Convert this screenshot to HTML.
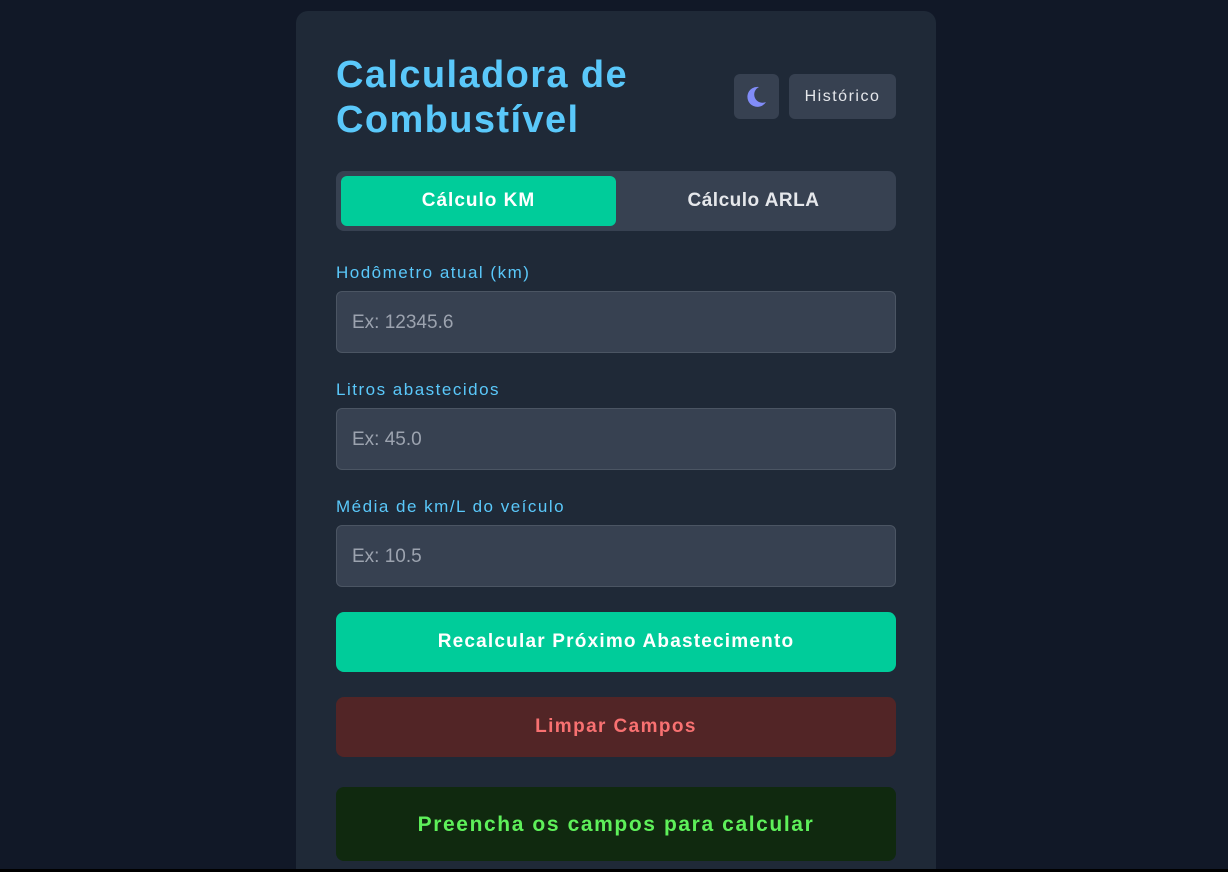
<!DOCTYPE html>
<html><head><meta charset="utf-8"><style>
*{box-sizing:border-box;margin:0;padding:0}
html,body{width:1228px;height:872px;overflow:hidden}
body{background:#111827;font-family:"Liberation Sans",sans-serif;position:relative}
.card{position:absolute;left:296px;top:11px;width:640px;height:861px;background:#1f2937;border-radius:12px 12px 0 0}
.title{position:absolute;left:40px;top:42px;color:#5ac8fa;font-size:38px;font-weight:bold;line-height:45px;letter-spacing:1.4px}
.moon{position:absolute;left:438px;top:63px;width:45px;height:45px;background:#374151;border-radius:6px}
.hist{position:absolute;left:493px;top:63px;width:107px;height:45px;background:#374151;border-radius:6px;color:#e5e7eb;font-size:16px;line-height:45px;text-align:center;letter-spacing:1.5px}
.tabs{position:absolute;left:40px;top:160px;width:560px;height:60px;background:#374151;border-radius:8px}
.tab{position:absolute;top:5px;height:50px;width:275px;line-height:50px;text-align:center;font-size:19px;color:#e5e7eb;font-weight:bold;letter-spacing:0.5px}
.tab.on{left:5px;background:#00cc9a;border-radius:6px;color:#fff;letter-spacing:1px}
.lbl{position:absolute;left:40px;color:#5ac8fa;font-size:17px;letter-spacing:1.5px}
.inp{position:absolute;left:40px;width:560px;height:62px;background:#374151;border:1px solid #4b5563;border-radius:6px;color:#9ca3af;font-size:19px;line-height:62px;padding-left:15px}
.btn{position:absolute;left:40px;width:560px;height:60px;border-radius:8px;text-align:center;line-height:60px;font-size:19px;font-weight:bold}
.bot{position:absolute;left:0;top:869px;width:1228px;height:3px;background:#000}
</style></head><body>
<div class="card">
<div class="title">Calculadora de<br>Combustível</div>
<div class="moon"><svg width="45" height="45" viewBox="0 0 45 45"><path d="M25 13 A10 10 0 1 0 32 28 A8 8 0 0 1 25 13Z" fill="#818cf8"/></svg></div>
<div class="hist">Histórico</div>
<div class="tabs"><div class="tab on">Cálculo KM</div><div class="tab" style="left:280px">Cálculo ARLA</div></div>
<div class="lbl" style="top:252px">Hodômetro atual (km)</div>
<div class="inp" style="top:280px">Ex: 12345.6</div>
<div class="lbl" style="top:369px">Litros abastecidos</div>
<div class="inp" style="top:397px">Ex: 45.0</div>
<div class="lbl" style="top:486px">Média de km/L do veículo</div>
<div class="inp" style="top:514px">Ex: 10.5</div>
<div class="btn" style="top:601px;background:#00cc9a;color:#fff;letter-spacing:1.2px">Recalcular Próximo Abastecimento</div>
<div class="btn" style="top:686px;background:#522526;color:#f87171;letter-spacing:1.4px">Limpar Campos</div>
<div class="btn" style="top:776px;height:74px;line-height:76px;background:#10290f;color:#5ef05a;font-size:21px;letter-spacing:1.6px">Preencha os campos para calcular</div>
</div>
<div class="bot"></div>
</body></html>
